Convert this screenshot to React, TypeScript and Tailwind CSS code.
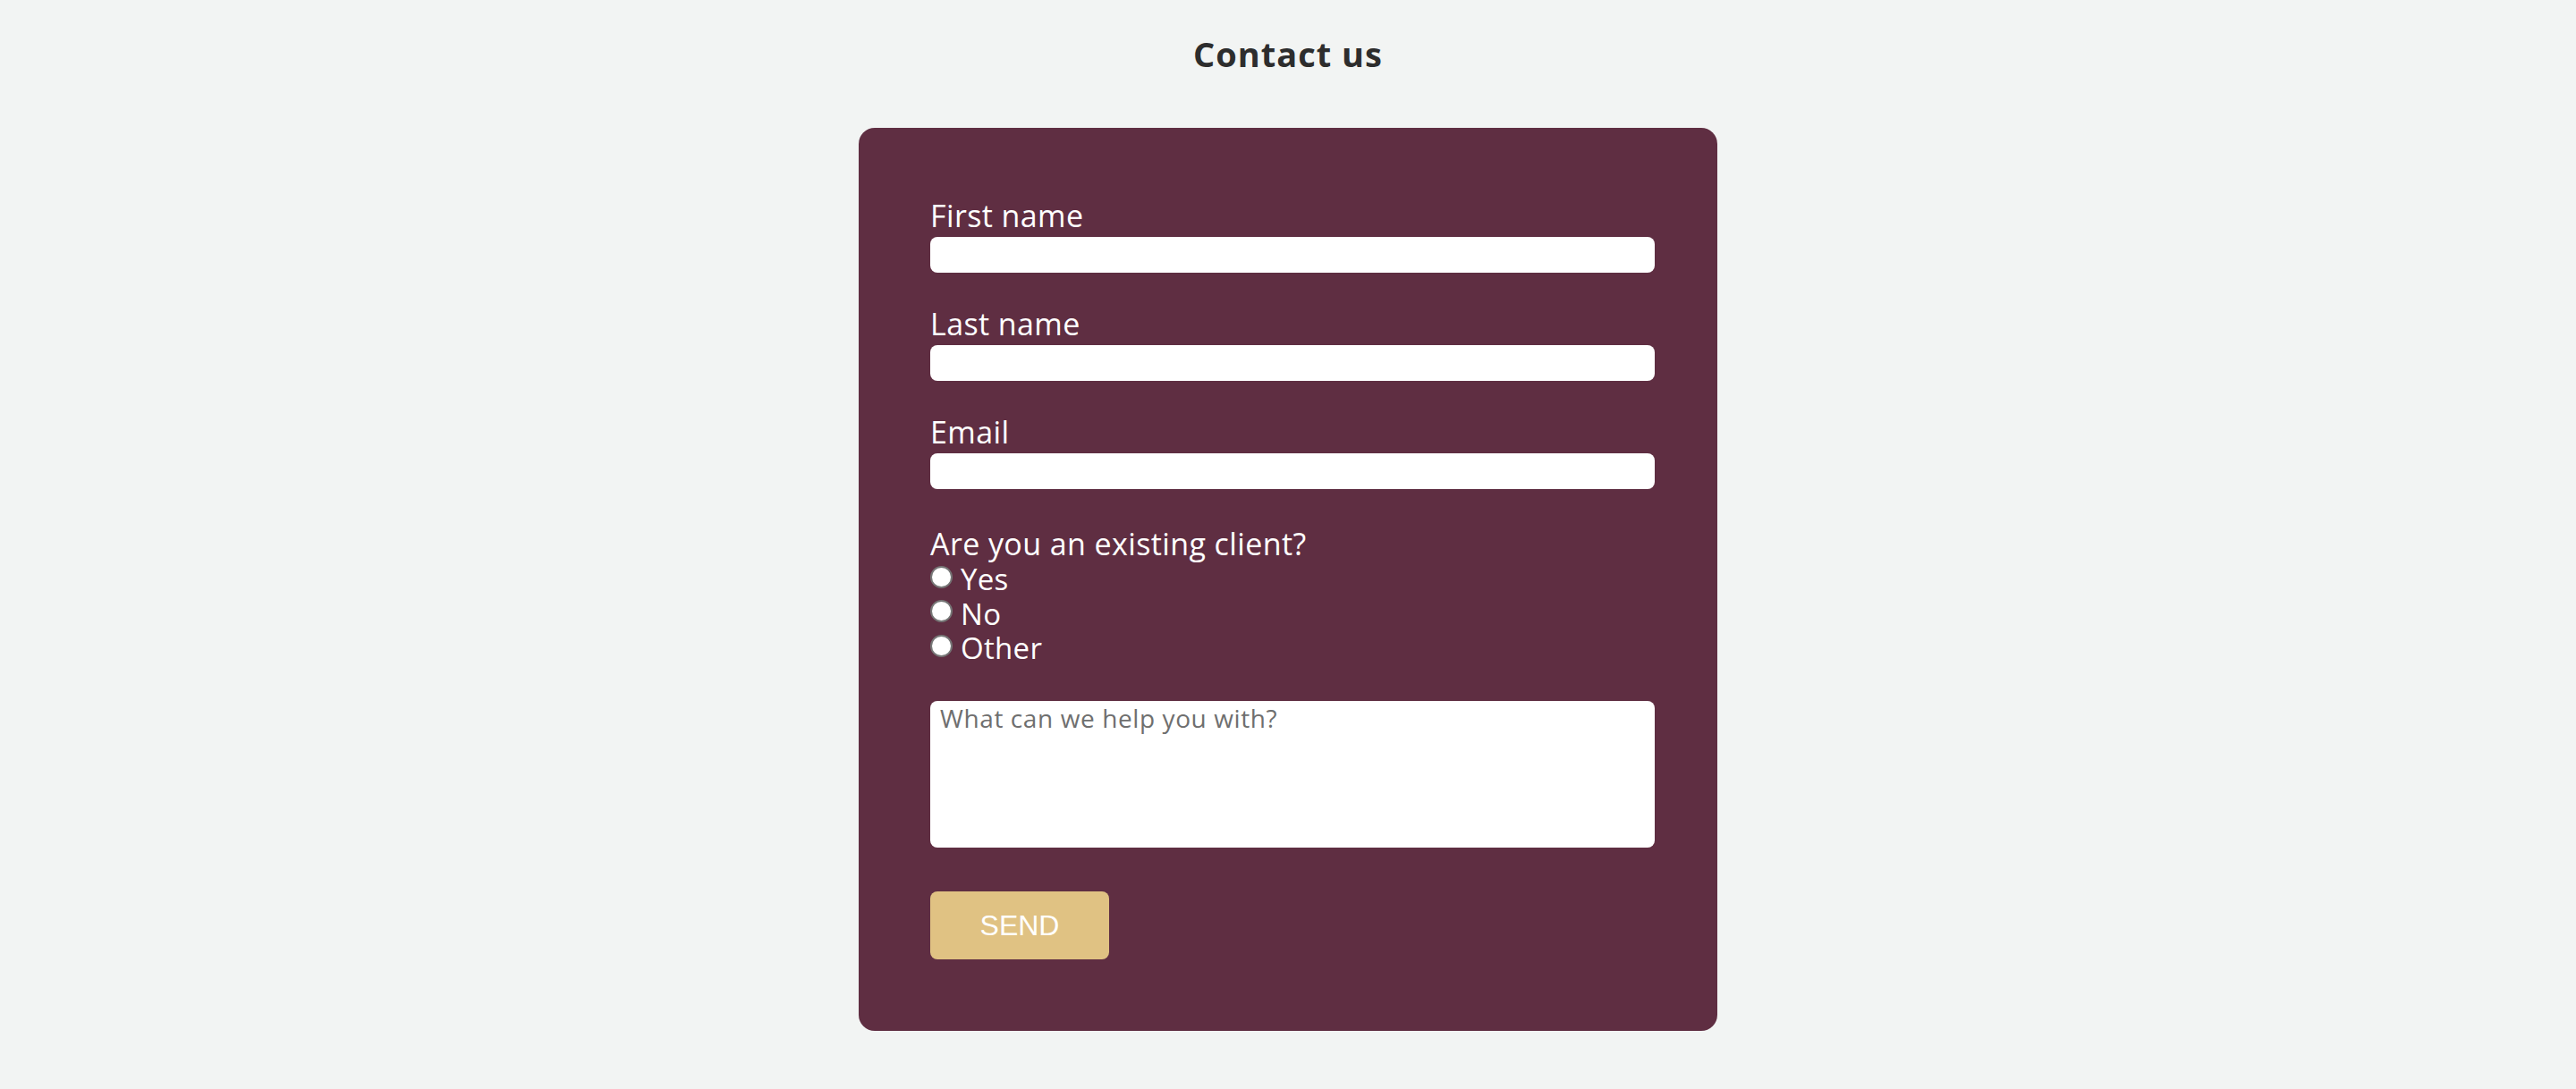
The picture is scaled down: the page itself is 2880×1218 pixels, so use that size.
const fields = ["First name", "Last name", "Email"];
const options = ["Yes", "No", "Other"];

export default function App() {
  return (
    <div className="min-h-screen bg-[#f2f4f3] pt-[38px] pb-16 font-['Open_Sans',sans-serif]">
      <h1 className="text-center text-[38px] leading-[44px] font-bold tracking-[1px] text-[#2d2d2d]">Contact us</h1>

      <form className="mx-auto mt-[61px] w-[960px] rounded-[18px] bg-[#5f2e42] pt-[78px] pb-[80px] pl-[80px]">
        {fields.map((label, i) => (
          <div key={label} className={i === 0 ? "" : "mt-[37px]"}>
            <label className="block text-[34px] leading-[40px] tracking-[0.4px] text-white">{label}</label>
            <input
              type="text"
              className="mt-1 block h-[40px] w-[810px] rounded-lg bg-white px-3 text-[26px] outline-none"
            />
          </div>
        ))}

        <div className="mt-[42px]">
          <p className="text-[34px] leading-[38px] tracking-[0.4px] text-white">Are you an existing client?</p>
          <div className="mt-[2px] flex flex-col">
            {options.map((opt) => (
              <label
                key={opt}
                className="flex h-[38.5px] items-center text-[33px] leading-[34px] tracking-[0.3px] text-white"
              >
                <input
                  type="radio"
                  name="client"
                  className="mr-[9px] -mt-[6px] h-[25px] w-[25px] appearance-none rounded-full border-2 border-[#767676] bg-white"
                />
                {opt}
              </label>
            ))}
          </div>
        </div>

        <textarea
          placeholder="What can we help you with?"
          className="mt-[39px] block h-[164px] w-[810px] resize-none rounded-lg bg-white px-[11px] py-[2px] text-[28px] leading-[34px] tracking-[0.6px] text-[#333] outline-none placeholder:text-[#6f6f6f]"
        />

        <button
          type="button"
          className="mt-[49px] block h-[76px] w-[200px] rounded-lg bg-[#e0c283] font-['Liberation_Sans',sans-serif] text-[32px] font-medium text-white"
        >
          SEND
        </button>
      </form>
    </div>
  );
}
